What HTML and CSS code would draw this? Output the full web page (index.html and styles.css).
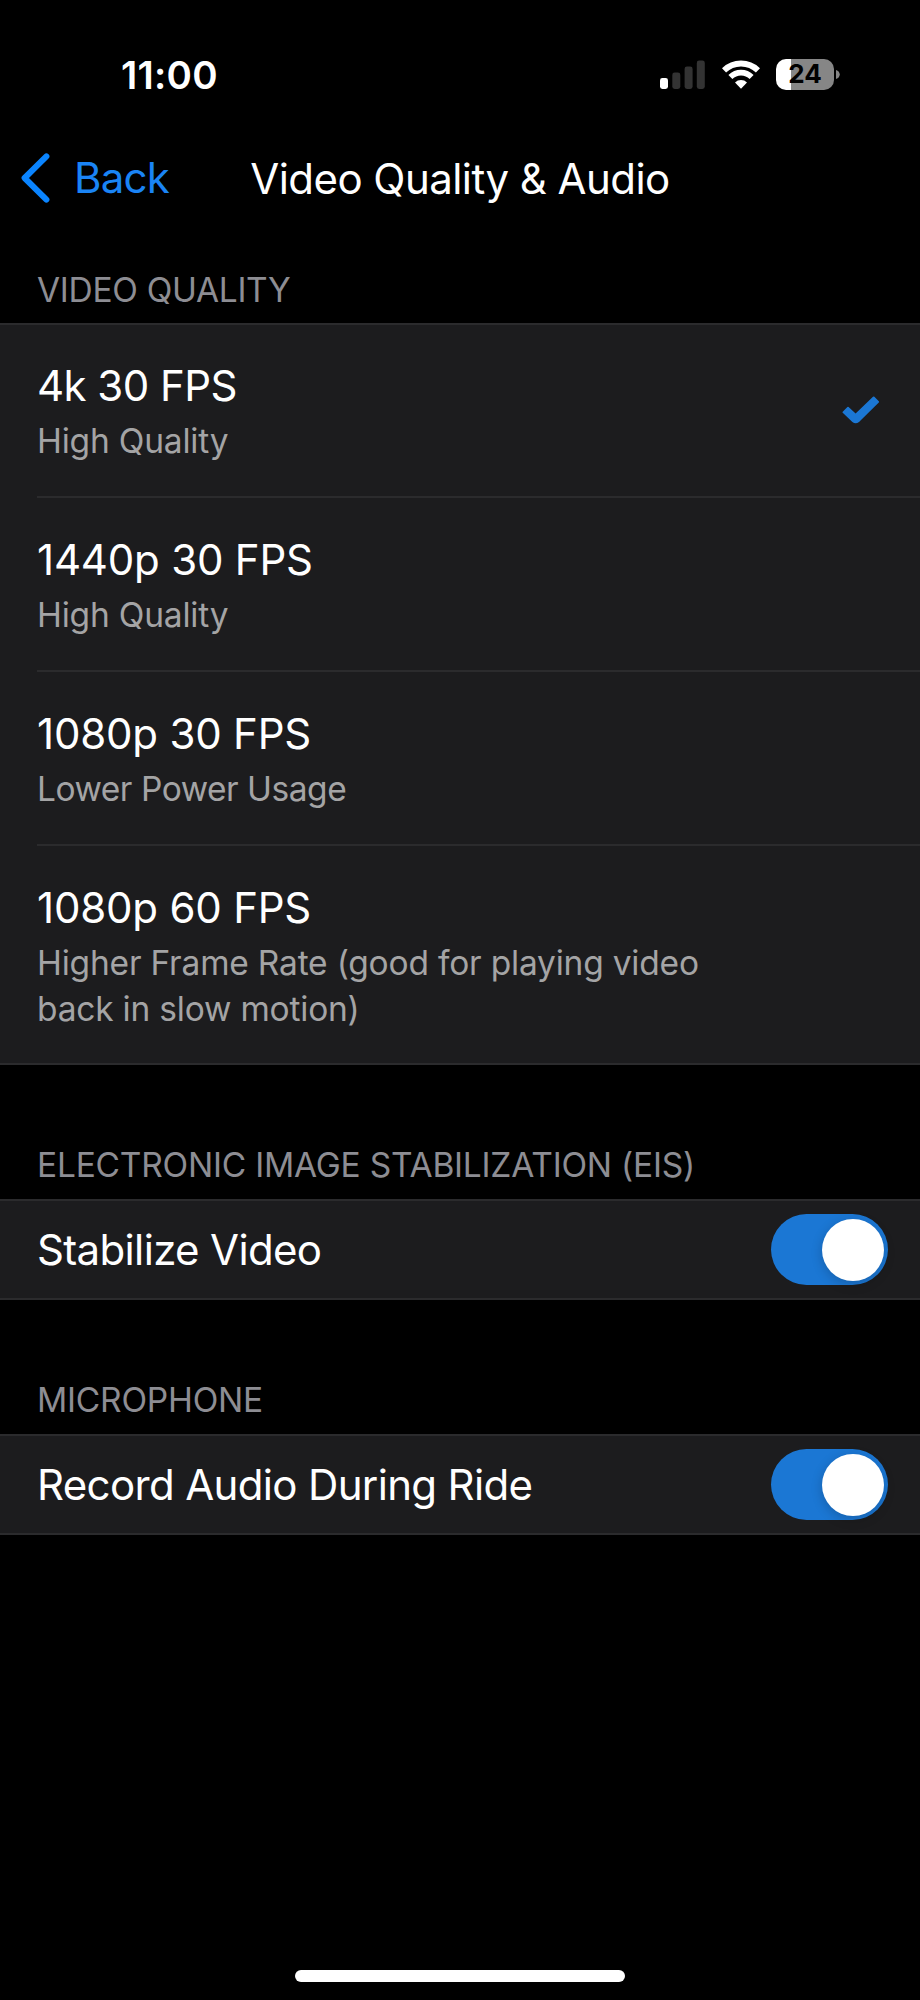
FILE: index.html
```
<!DOCTYPE html>
<html lang="en">
<head>
    <meta charset="UTF-8">
    <meta name="viewport" content="width=device-width, initial-scale=1.0">
    <title>Video Quality &amp; Audio</title>
    <link rel="stylesheet" href="styles.css">
</head>
<body>
    <div class="status-bar">
        <span class="time">11:00</span>
        <div class="status-icons">
            <svg class="signal" width="46" height="30" viewBox="0 0 46 30">
                <rect x="0" y="18" width="8" height="11" rx="2.4" fill="#fff"/>
                <rect x="12.3" y="12.5" width="8" height="16.5" rx="2.4" fill="#333"/>
                <rect x="24.6" y="6.5" width="8" height="22.5" rx="2.4" fill="#333"/>
                <rect x="36.8" y="0.5" width="8" height="28.5" rx="2.4" fill="#333"/>
            </svg>
            <svg class="wifi" width="38" height="30" viewBox="0 0 38 30">
                <path d="M2 10.4a24.4 24.4 0 0 1 34 0" fill="none" stroke="#fff" stroke-width="6"/>
                <path d="M8.4 17a15 15 0 0 1 21.2 0" fill="none" stroke="#fff" stroke-width="5.6"/>
                <path d="M13 22.4a8.8 8.8 0 0 1 12 0L19 28.8z" fill="#fff"/>
            </svg>
            <div class="battery">24</div>
            <svg class="battery-cap" width="4" height="9" viewBox="0 0 4 9">
                <path d="M0 0c5 1.6 5 7.4 0 9z" fill="#868686"/>
            </svg>
        </div>
    </div>

    <div class="nav">
        <a class="back">
            <svg width="32" height="52" viewBox="0 0 32 52">
                <path d="M26.4 4.4L4.6 26l21.8 21.6" fill="none" stroke="#0a84ff" stroke-width="6" stroke-linecap="round" stroke-linejoin="round"/>
            </svg>
            Back
        </a>
        <h1>Video Quality &amp; Audio</h1>
    </div>

    <h2 class="first">VIDEO QUALITY</h2>
    <ul class="group">
        <li class="option selected">
            <div>
                <p class="label">4k 30 FPS</p>
                <p class="detail">High Quality</p>
            </div>
            <svg class="check" width="38" height="28" viewBox="0 0 38 28">
                <path d="M0.7 15.8L5.4 11Q6 10.4 6.6 11L13.6 17.6L31 0.8Q31.7 0.2 32.4 0.8L36.8 5.2Q37.4 5.8 36.8 6.4L17 26Q13.6 28.6 10.4 26L0.7 16.8Q0.2 16.3 0.7 15.8z" fill="#1b77d4"/>
            </svg>
        </li>
        <li class="option">
            <div>
                <p class="label">1440p 30 FPS</p>
                <p class="detail">High Quality</p>
            </div>
        </li>
        <li class="option">
            <div>
                <p class="label">1080p 30 FPS</p>
                <p class="detail tight">Lower Power Usage</p>
            </div>
        </li>
        <li class="option last">
            <div>
                <p class="label">1080p 60 FPS</p>
                <p class="detail">Higher Frame Rate (good for playing video<br>back in slow motion)</p>
            </div>
        </li>
    </ul>

    <h2>ELECTRONIC IMAGE STABILIZATION (EIS)</h2>
    <div class="group setting">
        <p class="label">Stabilize Video</p>
        <div class="toggle"></div>
    </div>

    <h2>MICROPHONE</h2>
    <div class="group setting">
        <p class="label">Record Audio During Ride</p>
        <div class="toggle"></div>
    </div>

    <div class="home-bar"></div>
</body>
</html>
```
FILE: styles.css
```
* {
    box-sizing: border-box;
}
body {
    font-family: Inter, "Liberation Sans", sans-serif;
    background-color: #000;
    color: #fff;
    margin: 0;
    height: 2000px;
    display: flex;
    flex-direction: column;
    overflow: hidden;
}
h1, h2, p, ul {
    margin: 0;
    padding: 0;
    font-weight: 400;
}
ul {
    list-style-type: none;
}
svg {
    display: block;
    flex: none;
}
.status-bar {
    display: flex;
    justify-content: space-between;
    align-items: center;
    height: 150px;
    padding: 0 80px 0 121px;
}
.time {
    font-size: 38.5px;
    font-weight: 600;
    letter-spacing: 0.25px;
}
.status-icons {
    display: flex;
    align-items: center;
    margin-bottom: 1px;
}
.wifi {
    margin-left: 15.5px;
}
.battery {
    width: 58px;
    height: 31px;
    margin-left: 16.5px;
    border-radius: 10px;
    background: linear-gradient(to right, #fff 15px, #868686 15px);
    color: #000;
    font-size: 26px;
    font-weight: 700;
    line-height: 30px;
    text-align: center;
}
.battery-cap {
    margin-left: 2px;
}
.nav {
    display: grid;
    grid-template-columns: 1fr auto 1fr;
    align-items: center;
    height: 56px;
    padding: 0 20px;
}
.back {
    display: flex;
    align-items: center;
    gap: 22px;
    color: #1a84f5;
    font-size: 42px;
    line-height: 50px;
    letter-spacing: -0.8px;
}
h1 {
    font-size: 42px;
    line-height: 50px;
    letter-spacing: -0.55px;
    padding-top: 2px;
}
h2 {
    height: 134px;
    padding: 78px 37px 0;
    color: #8d8d93;
    font-size: 33.5px;
    line-height: 44px;
    letter-spacing: -0.22px;
}
h2.first {
    height: 117px;
    padding-top: 62px;
    letter-spacing: -0.3px;
}
.group {
    background-color: #1c1c1e;
    border-top: 2px solid #2b2b2d;
    border-bottom: 2px solid #2b2b2d;
}
.option {
    display: flex;
    justify-content: space-between;
    height: 174px;
    margin-left: 37px;
    padding: 35px 40px 0 0;
    border-bottom: 2px solid #2b2b2d;
}
.option.selected {
    height: 173px;
    padding-top: 34px;
}
.option.last {
    height: 217px;
    border-bottom: none;
}
.label {
    font-size: 42px;
    line-height: 54px;
    letter-spacing: -0.2px;
}
.selected .label {
    letter-spacing: -0.55px;
}
.setting .label {
    letter-spacing: -0.65px;
}
.detail {
    margin-top: 5px;
    color: #a4a4a5;
    font-size: 33.5px;
    line-height: 46px;
    letter-spacing: -0.2px;
}
.detail.tight {
    letter-spacing: -0.48px;
}
.check {
    margin-top: 37px;
}
.setting {
    display: flex;
    justify-content: space-between;
    align-items: center;
    height: 101px;
    padding: 0 32px 0 37px;
}
.toggle {
    display: flex;
    justify-content: flex-end;
    align-items: center;
    width: 117px;
    height: 71px;
    padding-right: 4px;
    border-radius: 36px;
    background-color: #1b77d4;
}
.toggle::after {
    content: "";
    width: 62px;
    height: 62px;
    border-radius: 50%;
    background-color: #fff;
    box-shadow: 0 3px 12px rgba(0, 0, 0, 0.2);
}
.home-bar {
    width: 330px;
    height: 12px;
    margin: auto auto 18px;
    border-radius: 6px;
    background-color: #fff;
}
```
